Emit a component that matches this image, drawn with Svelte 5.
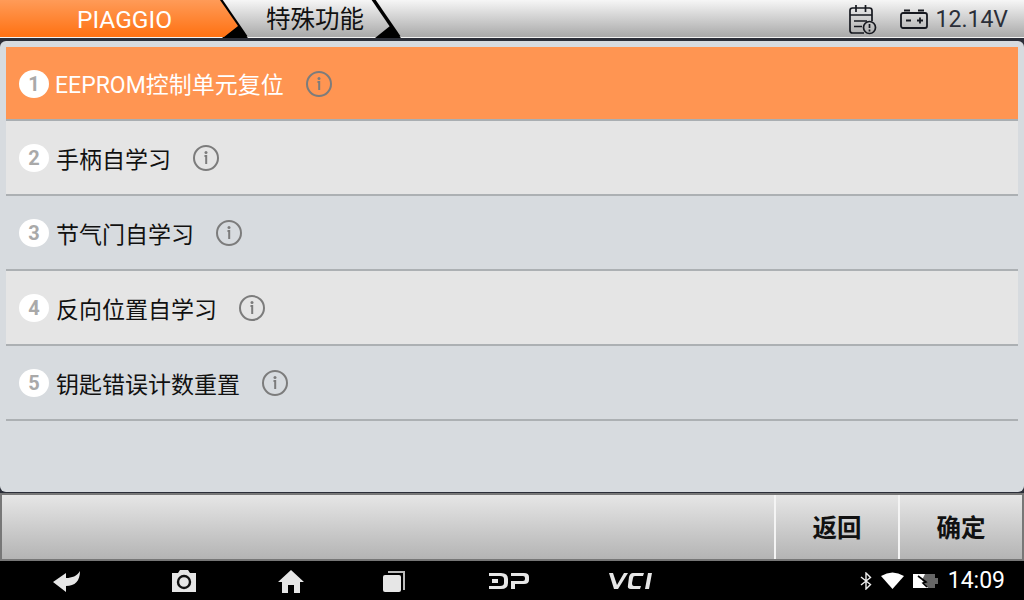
<script>
  const items = [
    { name: 'EEPROM控制单元复位', active: true },
    { name: '手柄自学习' },
    { name: '节气门自学习' },
    { name: '反向位置自学习' },
    { name: '钥匙错误计数重置' }
  ];
</script>

<div class="screen">
  <header class="topbar">
    <div class="crumb first">PIAGGIO</div>
    <svg class="chev" width="32" height="38" viewBox="0 0 32 38">
      <path d="M2 -1 L28 37" stroke="#000" stroke-width="3.400" fill="none" />
      <path d="M4 38 L19 26 L30 38 Z" fill="#000" />
    </svg>
    <div class="crumb second">特殊功能</div>
    <svg class="chev" width="32" height="38" viewBox="0 0 32 38">
      <path d="M2 -1 L28 37" stroke="#000" stroke-width="3.400" fill="none" />
      <path d="M4 38 L19 26 L30 38 Z" fill="#000" />
    </svg>
    <div class="status">
      <svg class="cal" width="28" height="30" viewBox="0 0 28 30" fill="none" stroke="#16181f" stroke-width="1.700">
        <path d="M15 28 H3.500 Q1 28 1 25.500 V5.500 Q1 3 3.500 3 H20.500 Q23 3 23 5.500 V16" />
        <path d="M7 0 V7 M16.500 0 V7 M1 10 H23 M5 16 H18 M5 21.500 H13" />
        <circle cx="20.500" cy="22.500" r="6" />
        <path d="M20.500 19 V23 M20.500 24.500 V26.500" />
      </svg>
      <svg class="batt" width="28" height="20" viewBox="0 0 28 20" fill="none" stroke="#16181f" stroke-width="1.800">
        <rect x="1" y="4" width="26" height="15" rx="2" />
        <path d="M4 1.500 H10 M18 1.500 H24 M6 11.500 H11 M17 11.500 H23 M20 8.500 V14.500" />
      </svg>
      <span class="volts">12.14V</span>
    </div>
  </header>

  <main class="panel">
    {#each items as item, i}
      <div class="row" class:active={item.active}>
        <span class="num">{i + 1}</span>
        <span class="label">{item.name}</span>
        <svg class="info" width="28" height="28" viewBox="0 0 28 28" fill="none">
          <circle cx="14" cy="14" r="12" stroke="#7c7c7c" stroke-width="2" />
          <circle cx="14" cy="8.500" r="1.500" fill="#7c7c7c" />
          <path d="M12.500 12 H14.200 V20" stroke="#7c7c7c" stroke-width="2" />
        </svg>
      </div>
    {/each}
  </main>

  <div class="actions">
    <button class="action">返回</button>
    <button class="action">确定</button>
  </div>

  <footer class="navbar">
    <svg class="nav back" width="30" height="24" viewBox="0 0 30 24" fill="#e6e6e6">
      <path d="M1 13 L14 4 V9 C20 9 25 7 28 2 C28 12 23 17 14 17 V23 Z" />
    </svg>
    <svg class="nav cam" width="26" height="24" viewBox="0 0 26 24">
      <path fill="#e6e6e6" d="M1 4 H7 L9 1 H17 L19 4 H25 V23 H1 Z" />
      <circle cx="13" cy="13" r="6" fill="none" stroke="#111" stroke-width="2.400" />
    </svg>
    <svg class="nav home" width="28" height="24" viewBox="0 0 28 24" fill="#e6e6e6">
      <path d="M14 1 L27 13 H23 V24 H17 V16 H11 V24 H5 V13 H1 Z" />
    </svg>
    <svg class="nav recent" width="24" height="24" viewBox="0 0 24 24">
      <rect x="1" y="6" width="18" height="17" rx="2" fill="#e6e6e6" />
      <path d="M6 3 H22 V21" fill="none" stroke="#bbb" stroke-width="2" />
    </svg>
    <svg class="nav dp" width="42" height="20" viewBox="0 0 42 20" fill="#e6e6e6">
      <path d="M1 2 H13 Q20 2 20 8 V12 Q20 18 13 18 H1 V15 H12 Q16 15 16 12 V8 Q16 5 12 5 H1 Z M4 8 H10 V12 H4 Z" />
      <path d="M23 2 H36 Q41 2 41 6 V9 Q41 13 36 13 H27 V18 H23 V10 H35 Q37 10 37 8 V7 Q37 5 35 5 H23 Z" />
    </svg>
    <svg class="nav vci" width="46" height="20" viewBox="0 0 46 20" fill="#e6e6e6">
      <path d="M1 2 H5 L9 14 L16 2 H20 L10 18 H6 Z" />
      <path d="M25 2 H36 L35 5 H27 Q25 5 25 7 L24 12 Q24 15 26 15 H33 L32 18 H23 Q19 18 20 14 L21 6 Q22 2 25 2 Z" />
      <path d="M40 2 H44 L41 18 H37 Z" />
    </svg>
    <div class="tray">
      <svg width="12" height="18" viewBox="0 0 12 18" fill="none" stroke="#eee" stroke-width="1.400">
        <path d="M1 5 L10.500 12.500 L6 17 V1 L10.500 5.500 L1 13" />
      </svg>
      <svg width="23" height="17" viewBox="0 0 23 17" fill="#fff"><path d="M0 4 Q11.500 -3 23 4 L11.500 17 Z" /></svg>
      <svg width="25" height="16" viewBox="0 0 25 16">
        <rect x="0" y="1" width="22" height="14" fill="#666" />
        <rect x="22" y="5" width="3" height="6" fill="#666" />
        <path d="M0 1 H12 L9 7 L15 15 H0 Z" fill="#fff" />
        <path d="M5 3 L13 9 L10 10 L14 14" stroke="#000" stroke-width="1.600" fill="none" />
      </svg>
      <span class="clock">14:09</span>
    </div>
  </footer>
</div>

<style>
  :global(body) {
    margin: 0;
  }

  .screen {
    width: 1024px;
    height: 600px;
    display: flex;
    flex-direction: column;
    overflow: hidden;
    background: #2b2e38;
    font-family: Roboto, "Noto Sans CJK SC", sans-serif;
  }

  .topbar {
    height: 38px;
    flex: none;
    display: flex;
    box-sizing: border-box;
    border-bottom: 1px solid #f2f2f2;
    background: linear-gradient(#f6f6f6, #a9a9a9);
  }

  .crumb {
    height: 38px;
    line-height: 40px;
    font-size: 24.500px;
    box-sizing: border-box;
  }

  .first {
    width: 240px;
    margin-right: -22px;
    padding-left: 77px;
    color: #fff;
    background: linear-gradient(#ff9b58, #ff7010);
    clip-path: polygon(0 0, 220px 0, 238px 26px, 224px 37px, 0 37px);
  }

  .chev {
    flex: none;
    display: block;
    height: 38px;
  }

  .second {
    width: 153px;
    flex: none;
    margin-left: -32px;
    padding-left: 48px;
    color: #111;
  }

  .status {
    margin-left: auto;
    padding-right: 16px;
    display: flex;
    align-items: center;
    gap: 8px;
  }

  .cal {
    margin: 3px 15px 0 0;
  }

  .batt {
    margin-top: 1px;
  }

  .volts {
    margin-top: 2px;
    font-size: 23px;
    color: #2b2e38;
  }

  .panel {
    height: 451px;
    flex: none;
    margin-top: 3px;
    padding: 6px 6px 0;
    box-sizing: border-box;
    background: #d7dbdf;
    border-radius: 6px;
  }

  .row {
    height: 75px;
    box-sizing: border-box;
    display: flex;
    align-items: center;
    padding-left: 13px;
    background: #e5e5e5;
    border-bottom: 2px solid #acb0b3;
    color: #111;
    font-size: 23px;
  }

  .row:nth-child(odd):not(.active) {
    background: #d7dbdf;
  }

  .row.active {
    height: 74px;
    background: #ff9552;
    color: #fff;
    border-bottom-color: #a9aeb2;
  }

  .num {
    width: 30px;
    height: 28px;
    flex: none;
    margin-right: 7px;
    border-radius: 50%;
    background: #fff;
    color: #a9a9a9;
    font-size: 20px;
    font-weight: 700;
    line-height: 29px;
    text-align: center;
  }

  .active .num,
  .active .info {
    margin-top: 2px;
  }

  .active .label {
    margin-left: -1px;
  }

  .info {
    margin-left: 21px;
    flex: none;
  }

  .actions {
    height: 68px;
    flex: none;
    margin-top: 1px;
    display: flex;
    justify-content: flex-end;
    box-sizing: border-box;
    border: 2px solid #777;
    background: linear-gradient(#e6e6e6, #b4b4b4);
  }

  .action {
    width: 124px;
    height: 100%;
    padding: 0 0 2px;
    border: none;
    border-left: 2px solid #f4f4f4;
    background: transparent;
    color: #111;
    font: 700 24.500px "Noto Sans CJK SC", sans-serif;
  }

  .navbar {
    flex: 1;
    display: flex;
    align-items: center;
    background: #000;
  }

  .nav {
    flex: none;
    display: block;
  }

  .back {
    margin-left: 52px;
  }

  .cam {
    margin-left: 89px;
  }

  .home {
    margin-left: 80px;
  }

  .recent {
    margin-left: 77px;
  }

  .dp {
    margin-left: 82px;
  }

  .vci {
    margin-left: 78px;
  }

  .tray {
    margin-left: auto;
    padding-right: 19px;
    display: flex;
    align-items: center;
    gap: 9px;
  }

  .clock {
    margin-left: 1px;
    color: #fff;
    font-size: 23px;
  }
</style>
